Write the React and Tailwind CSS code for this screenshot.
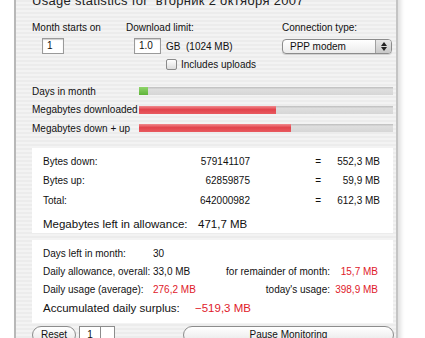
const font = { fontFamily: '"Liberation Sans", Arial, sans-serif' };

function Bar({ label, fill, color }) {
  const fills = {
    green: 'bg-[linear-gradient(#8fd46a,#5fb43a)]',
    red: 'bg-[linear-gradient(#f08a8e,#e2434b_45%,#e85a60)]',
  };
  return (
    <div className="flex items-center h-[18.5px]">
      <div className="w-[107px] text-[10px] text-[#111]">{label}</div>
      <div className="w-[254px] h-[8px] bg-[linear-gradient(#bdbdbd,#dedede_30%,#d6d6d6)]">
        <div className={`h-full ${fills[color]}`} style={{ width: fill }} />
      </div>
    </div>
  );
}

function StatRow({ label, num, val }) {
  return (
    <div className="flex items-center h-[19.5px] text-[10px] text-[#111]">
      <div className="w-[130px]">{label}</div>
      <div className="w-[77px] text-right">{num}</div>
      <div className="w-[73px] text-right pr-[2px]">=</div>
      <div className="w-[57px] text-right">{val}</div>
    </div>
  );
}

export default function App() {
  return (
    <div className="w-[425px] h-[338px] overflow-hidden bg-white whitespace-nowrap" style={font}>
      <div className="ml-[14px] w-[384px] h-[360px] -mt-[6px] border-l-2 border-l-[#b8b8b8] border-r-2 border-r-[#c4c4c4] bg-[repeating-linear-gradient(0deg,#ececec_0px,#ececec_2px,#f3f3f3_2px,#f3f3f3_4px)] pl-[16px] shadow-[3px_0_4px_rgba(0,0,0,0.12)]">
        <div className="text-[13px] text-[#222] h-[13px] leading-[13px] tracking-[0.3px]">
          Usage statistics for&nbsp; вторник 2 октября 2007
        </div>

        <div className="flex mt-[15px] text-[10px] text-[#111]">
          <div className="w-[94px]">
            <div className="h-[12px] leading-[12px]">Month starts on</div>
            <div className="mt-[4px] ml-[10px] w-[22px] h-[16px] bg-white border border-[#9a9a9a] shadow-[inset_0_1px_1px_rgba(0,0,0,0.2)] pl-[4px] leading-[14px]">1</div>
          </div>
          <div className="w-[156px]">
            <div className="h-[12px] leading-[12px]">Download limit:</div>
            <div className="mt-[4px] ml-[8px] flex items-center">
              <div className="w-[27px] h-[16px] bg-white border border-[#9a9a9a] shadow-[inset_0_1px_1px_rgba(0,0,0,0.2)] pl-[4px] leading-[14px]">1.0</div>
              <span className="ml-[5px]">GB&nbsp; (1024 MB)</span>
            </div>
            <div className="mt-[3px] ml-[40px] flex items-center">
              <div className="w-[11px] h-[11px] rounded-[2px] border border-[#8a8a8a] bg-[linear-gradient(#ffffff,#dcdcdc)]" />
              <span className="ml-[4px]">Includes uploads</span>
            </div>
          </div>
          <div>
            <div className="h-[12px] leading-[12px]">Connection type:</div>
            <div className="mt-[5px] w-[110px] h-[15px] rounded-[4px] border border-[#8c8c8c] bg-[linear-gradient(#ffffff,#ececec)] flex items-center shadow-[0_1px_1px_rgba(0,0,0,0.15)]">
              <span className="pl-[7px] flex-1 leading-[13px]">PPP modem</span>
              <div className="w-[16px] h-full border-l border-[#a0a0a0] rounded-r-[3px] bg-[linear-gradient(#e8e8e8,#c8c8c8)] flex flex-col items-center justify-center gap-[1px]">
                <svg width="6" height="4" viewBox="0 0 6 4"><path d="M0 4 L3 0 L6 4 Z" fill="#222" /></svg>
                <svg width="6" height="4" viewBox="0 0 6 4"><path d="M0 0 L3 4 L6 0 Z" fill="#222" /></svg>
              </div>
            </div>
          </div>
        </div>

        <div className="mt-[10px]">
          <Bar label="Days in month" fill="9px" color="green" />
          <Bar label="Megabytes downloaded" fill="137px" color="red" />
          <Bar label="Megabytes down + up" fill="152px" color="red" />
        </div>

        <div className="mt-[10px] w-[361px] h-[85px] bg-white pl-[11px] pt-[4px]">
          <StatRow label="Bytes down:" num="579141107" val="552,3 MB" />
          <StatRow label="Bytes up:" num="62859875" val="59,9 MB" />
          <StatRow label="Total:" num="642000982" val="612,3 MB" />
          <div className="flex items-center h-[29px] text-[11.5px] text-[#111]">
            <span className="w-[155px]">Megabytes left in allowance:</span>
            <span>471,7 MB</span>
          </div>
        </div>

        <div className="mt-[7px] w-[361px] h-[83px] bg-white pl-[11px] pt-[5px] text-[10px] text-[#111]">
          <div className="flex items-center h-[18px]">
            <div className="w-[110px]">Days left in month:</div>
            <div>30</div>
          </div>
          <div className="flex items-center h-[18px]">
            <div className="w-[110px]">Daily allowance, overall:</div>
            <div className="w-[60px]">33,0 MB</div>
            <div className="w-[117px] text-right">for remainder of month:</div>
            <div className="w-[48px] text-right text-[#e0202a]">15,7 MB</div>
          </div>
          <div className="flex items-center h-[18px]">
            <div className="w-[110px]">Daily usage (average):</div>
            <div className="w-[60px] text-[#e0202a]">276,2 MB</div>
            <div className="w-[117px] text-right">today's usage:</div>
            <div className="w-[48px] text-right text-[#e0202a]">398,9 MB</div>
          </div>
          <div className="flex items-center h-[21px] text-[11.5px]">
            <div className="w-[152px]">Accumulated daily surplus:</div>
            <div className="text-[#e0202a]">−519,3 MB</div>
          </div>
        </div>

        <div className="mt-[3px] flex items-start text-[10px] text-[#111]">
          <div className="w-[44px] h-[18px] rounded-full border border-[#8c8c8c] bg-[linear-gradient(#ffffff,#e6e6e6)] text-center leading-[16px]">Reset</div>
          <div className="ml-[3px] w-[36px] h-[18px] border border-[#8c8c8c] bg-white flex">
            <div className="w-[21px] border-r border-[#8c8c8c] text-center leading-[16px]">1</div>
          </div>
          <div className="ml-[68px] w-[211px] h-[18px] rounded-full border border-[#8c8c8c] bg-[linear-gradient(#ffffff,#e6e6e6)] text-center leading-[16px]">Pause Monitoring</div>
        </div>
      </div>
    </div>
  );
}
